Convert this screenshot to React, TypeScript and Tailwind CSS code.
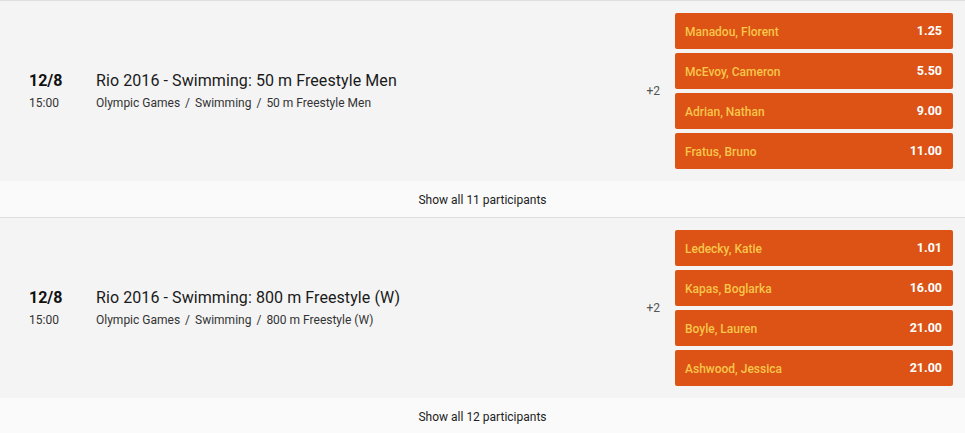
type Runner = { name: string; odds: string };

type Event = {
  date: string;
  time: string;
  title: string;
  path: string[];
  more: number;
  total: number;
  runners: Runner[];
};

const events: Event[] = [
  {
    date: "12/8",
    time: "15:00",
    title: "Rio 2016 - Swimming: 50 m Freestyle Men",
    path: ["Olympic Games", "Swimming", "50 m Freestyle Men"],
    more: 2,
    total: 11,
    runners: [
      { name: "Manadou, Florent", odds: "1.25" },
      { name: "McEvoy, Cameron", odds: "5.50" },
      { name: "Adrian, Nathan", odds: "9.00" },
      { name: "Fratus, Bruno", odds: "11.00" },
    ],
  },
  {
    date: "12/8",
    time: "15:00",
    title: "Rio 2016 - Swimming: 800 m Freestyle (W)",
    path: ["Olympic Games", "Swimming", "800 m Freestyle (W)"],
    more: 2,
    total: 12,
    runners: [
      { name: "Ledecky, Katie", odds: "1.01" },
      { name: "Kapas, Boglarka", odds: "16.00" },
      { name: "Boyle, Lauren", odds: "21.00" },
      { name: "Ashwood, Jessica", odds: "21.00" },
    ],
  },
];

function EventRow({ event }: { event: Event }) {
  return (
    <div className="border-b border-[#dedede]">
      <div className="flex items-center bg-[#f4f4f4] py-3 pr-3">
        <div className="w-[96px] shrink-0 pl-[29px]">
          <div className="text-[16px] font-bold leading-5 text-[#111]">
            {event.date}
          </div>
          <div className="mt-[4px] text-[12px] leading-4 text-[#333]">
            {event.time}
          </div>
        </div>
        <div className="flex-1">
          <div className="text-[16px] tracking-[0.08px] leading-5 text-[#1a1a1a]">
            {event.title}
          </div>
          <div className="mt-[4px] text-[12px] leading-4 text-[#333]">
            {event.path.map((p, i) => (
              <span key={i}>
                {i > 0 && <span className="mx-[5px]">/</span>}
                {p}
              </span>
            ))}
          </div>
        </div>
        <div className="w-[30px] pr-[15px] text-right text-[12px] text-[#555]">
          +{event.more}
        </div>
        <div className="flex w-[278px] flex-col gap-1">
          {event.runners.map((r) => (
            <button
              key={r.name}
              className="flex h-9 items-center justify-between rounded-[2px] bg-[#dc5315] pl-[10px] pr-[11px] pt-px"
            >
              <span className="text-[12px] font-medium text-[#f8c64a]">{r.name}</span>
              <span className="text-[12.5px] font-bold text-white">{r.odds}</span>
            </button>
          ))}
        </div>
      </div>
      <div className="flex h-9 items-center justify-center bg-[#fafafa] pt-px text-[12px] text-[#222]">
        Show all {event.total} participants
      </div>
    </div>
  );
}

export default function App() {
  return (
    <div
      className="w-[965px] border-t border-[#dedede] bg-white"
      style={{ fontFamily: "Roboto, 'Liberation Sans', sans-serif" }}
    >
      {events.map((e, i) => (
        <EventRow key={i} event={e} />
      ))}
    </div>
  );
}
